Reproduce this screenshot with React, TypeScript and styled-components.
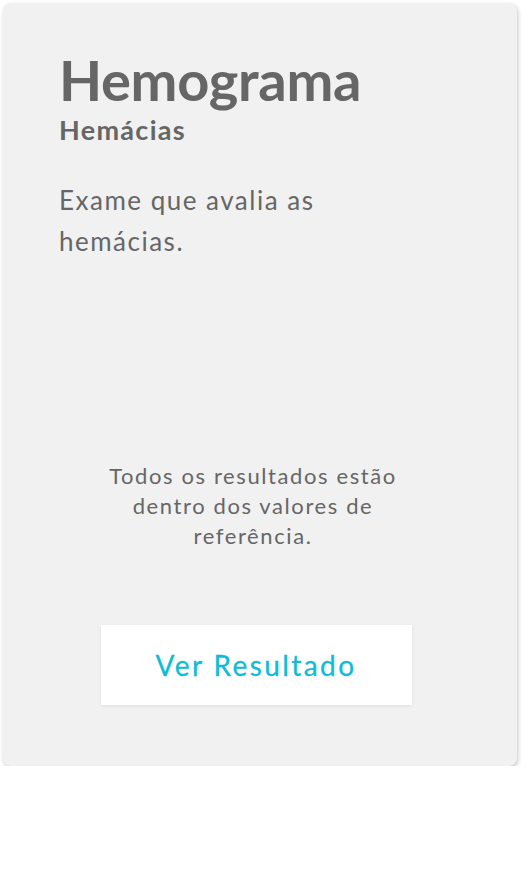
import React from "react";
import styled, { createGlobalStyle } from "styled-components";

const Global = createGlobalStyle`
  html, body { margin: 0; padding: 0; background: #ffffff; }
  body { font-family: Lato, "Open Sans", sans-serif; }
`;

const Page = styled.div`
  padding: 3px 9px 0 3px;
`;

const Card = styled.section`
  box-sizing: border-box;
  width: 514px;
  height: 763px;
  background: #f1f1f1;
  border-radius: 8px;
  box-shadow: 1px 2px 4px rgba(0, 0, 0, 0.22);
  padding: 49px 56px 61px 56px;
  display: flex;
  flex-direction: column;
  color: #666666;
`;

const Title = styled.h1`
  margin: 0;
  font-size: 56px;
  font-weight: 700;
  line-height: 56px;
  letter-spacing: -0.3px;
`;

const Subtitle = styled.h2`
  margin: 8px 0 0;
  font-size: 27px;
  font-weight: 700;
  line-height: 28px;
  letter-spacing: 1.3px;
`;

const Description = styled.p`
  margin: 36px 0 0;
  font-size: 26px;
  line-height: 41px;
  letter-spacing: 1.5px;
  width: 320px;
`;

const Spacer = styled.div`
  flex: 1;
`;

const Message = styled.p`
  margin: 0 0 0 -14px;
  text-align: center;
  font-size: 22px;
  line-height: 30px;
  letter-spacing: 1.6px;
  padding: 0 30px;
`;

const Button = styled.button`
  align-self: center;
  margin: 74px 8px 0 0;
  width: 311px;
  height: 80px;
  border: none;
  background: #ffffff;
  color: #10bcd5;
  font-family: Lato, "Open Sans", sans-serif;
  font-size: 28px;
  font-weight: 400;
  letter-spacing: 2.4px;
  -webkit-text-stroke: 0.3px #10bcd5;
  box-shadow: 0 1px 3px rgba(0, 0, 0, 0.08);
  cursor: pointer;
`;

export default function App() {
  return (
    <Page>
      <Global />
      <Card>
        <Title>Hemograma</Title>
        <Subtitle>Hemácias</Subtitle>
        <Description>Exame que avalia as hemácias.</Description>
        <Spacer />
        <Message>Todos os resultados estão dentro dos valores de referência.</Message>
        <Button>Ver Resultado</Button>
      </Card>
    </Page>
  );
}
